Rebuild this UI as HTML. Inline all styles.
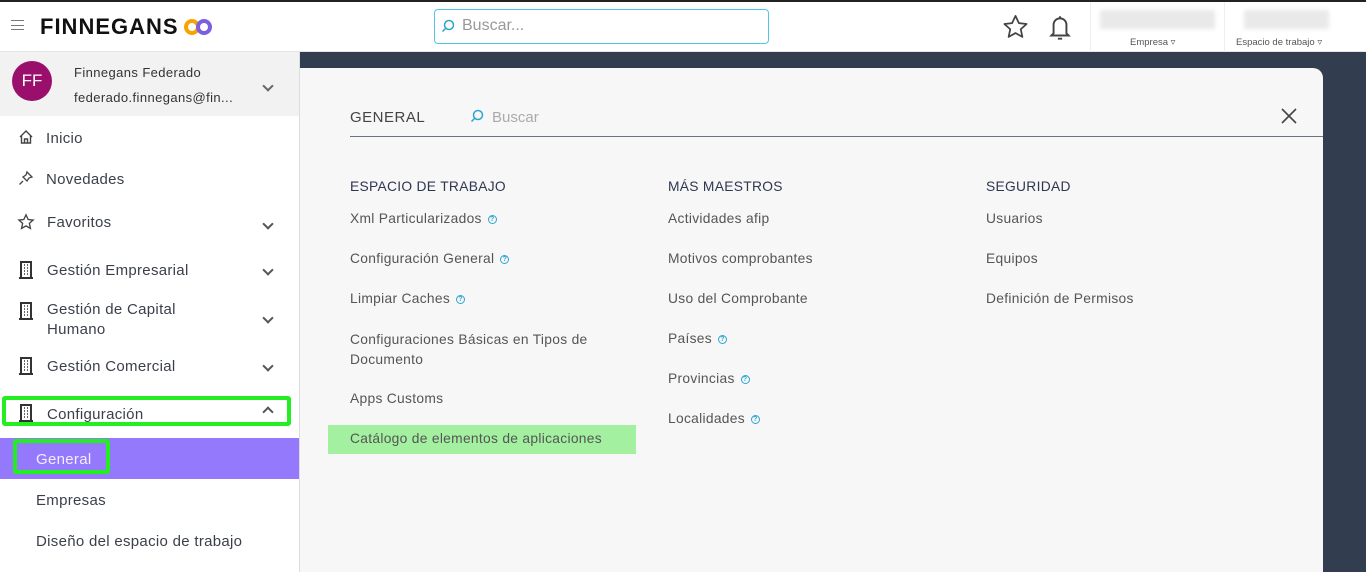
<!DOCTYPE html>
<html><head><meta charset="utf-8"><style>
*{margin:0;padding:0;box-sizing:border-box}
body{width:1366px;height:572px;overflow:hidden;font-family:"Liberation Sans",sans-serif;background:#fff;position:relative;color:#333}
.a{position:absolute;white-space:nowrap}
.top{position:absolute;left:0;top:0;width:1366px;height:52px;background:#fff;border-top:2px solid #222;border-bottom:1px solid #e6e6e6}
.side{position:absolute;left:0;top:52px;width:300px;height:520px;background:#fff;border-right:1px solid #ddd}
.bg{position:absolute;left:300px;top:52px;width:1066px;height:520px;background:#323d4f}
.panel{position:absolute;left:300px;top:68px;width:1023px;height:504px;background:#f7f7f7;border-top-right-radius:10px}
.nav{font-size:15px;color:#3a3f4a;letter-spacing:.3px}
.it{font-size:13.8px;color:#555;letter-spacing:.3px}
.hd{font-size:13.8px;color:#2f3650;letter-spacing:.3px}
.q{display:inline-block;width:9px;height:9px;border:1.3px solid #2ba6cf;border-radius:50%;font-size:7px;line-height:7px;text-align:center;color:#2ba6cf;margin-left:6px;vertical-align:2px;font-weight:bold}
.chev{position:absolute;left:264px;width:8px;height:8px;border-right:2px solid #555;border-bottom:2px solid #555;transform:rotate(45deg)}
</style></head><body>
<div class="top"></div>
<div class="a" style="left:11px;top:20px;width:13px;height:10px;border-top:1.5px solid #777;border-bottom:1.5px solid #777"></div>
<div class="a" style="left:11px;top:24.5px;width:13px;height:1.5px;background:#777"></div>
<div class="a" style="left:40px;top:14px;font-size:22px;font-weight:bold;color:#111;letter-spacing:1px">FINNEGANS</div>
<svg class="a" style="left:184px;top:18px" width="28" height="18" viewBox="0 0 28 18"><circle cx="8" cy="9" r="6" fill="none" stroke="#f7a400" stroke-width="4"/><circle cx="20" cy="9" r="6" fill="none" stroke="#7a5fe0" stroke-width="4"/></svg>
<div class="a" style="left:434px;top:9px;width:335px;height:35px;border:1px solid #4fc7e8;border-radius:4px"></div>
<svg class="a" style="left:441px;top:19px" width="14" height="14" viewBox="0 0 14 14"><circle cx="8" cy="6" r="4.5" fill="none" stroke="#2ba6cf" stroke-width="1.5"/><path d="M5 9L1.5 12.5" stroke="#2ba6cf" stroke-width="1.5"/></svg>
<div class="a" style="left:462px;top:17px;font-size:16px;color:#999">Buscar...</div>
<svg class="a" style="left:1001px;top:13px" width="29" height="28" viewBox="0 0 24 24"><path d="M12 2.5l2.9 6.2 6.6.7-5 4.5 1.4 6.6L12 17.2l-5.9 3.3 1.4-6.6-5-4.5 6.6-.7z" fill="none" stroke="#444" stroke-width="1.5" stroke-linejoin="round"/></svg>
<svg class="a" style="left:1047px;top:13px" width="26" height="30" viewBox="0 0 24 28"><path d="M6 19V11a6 6 0 0 1 12 0v8l2 2H4z" fill="none" stroke="#444" stroke-width="1.8"/><path d="M12 3v2M10 24h4" stroke="#444" stroke-width="1.8"/></svg>
<div class="a" style="left:1090px;top:2px;width:1px;height:50px;background:#eee"></div>
<div class="a" style="left:1224px;top:2px;width:1px;height:50px;background:#eee"></div>
<div class="a" style="left:1100px;top:10px;width:115px;height:19px;background:#e9e9e9;filter:blur(2px)"></div>
<div class="a" style="left:1244px;top:10px;width:85px;height:19px;background:#e9e9e9;filter:blur(2px)"></div>
<div class="a" style="left:1130px;top:37px;font-size:9.5px;color:#555">Empresa ▿</div>
<div class="a" style="left:1236px;top:37px;font-size:9.5px;color:#555">Espacio de trabajo ▿</div>

<div class="side"></div>
<div class="a" style="left:0;top:52px;width:299px;height:64px;background:#f2f2f2"></div>
<div class="a" style="left:12px;top:61px;width:40px;height:40px;border-radius:50%;background:#9a0f6b;color:#fff;font-size:17px;line-height:40px;text-align:center">FF</div>
<div class="a" style="left:74px;top:65px;font-size:13px;color:#333;letter-spacing:.4px">Finnegans Federado</div>
<div class="a" style="left:74px;top:90px;font-size:13px;color:#333;letter-spacing:.4px">federado.finnegans@fin...</div>
<div class="chev" style="top:82px;border-color:#666"></div>

<svg class="a" style="left:18px;top:129px" width="16" height="16" viewBox="0 0 16 16"><path d="M2 8L8 2l6 6M3.5 7v7h9V7M6.5 14v-4h3v4" fill="none" stroke="#444" stroke-width="1.4"/></svg>
<div class="a nav" style="left:46px;top:130px">Inicio</div>
<svg class="a" style="left:18px;top:170px" width="16" height="16" viewBox="0 0 16 16"><path d="M9 2l5 5-3 1-2 3-4-4 3-2zM5 11l-3.5 3.5" fill="none" stroke="#444" stroke-width="1.3"/></svg>
<div class="a nav" style="left:46px;top:171px">Novedades</div>
<svg class="a" style="left:17px;top:213px" width="18" height="18" viewBox="0 0 24 24"><path d="M12 2.5l2.9 6.2 6.6.7-5 4.5 1.4 6.6L12 17.2l-5.9 3.3 1.4-6.6-5-4.5 6.6-.7z" fill="none" stroke="#444" stroke-width="1.8"/></svg>
<div class="a nav" style="left:47px;top:214px">Favoritos</div><div class="chev" style="top:220px"></div>

<svg class="a" style="left:19px;top:261px" width="14" height="18" viewBox="0 0 14 18"><path d="M2 1h10v16H2zM0 17h14" fill="none" stroke="#333" stroke-width="2"/><path d="M5 4h1M8 4h1M5 7h1M8 7h1M5 10h1M8 10h1M5 13h1M8 13h1" stroke="#333" stroke-width="1.6"/></svg>
<div class="a nav" style="left:47px;top:262px">Gestión Empresarial</div><div class="chev" style="top:266px"></div>
<svg class="a" style="left:19px;top:302px" width="14" height="18" viewBox="0 0 14 18"><path d="M2 1h10v16H2zM0 17h14" fill="none" stroke="#333" stroke-width="2"/><path d="M5 4h1M8 4h1M5 7h1M8 7h1M5 10h1M8 10h1M5 13h1M8 13h1" stroke="#333" stroke-width="1.6"/></svg>
<div class="a nav" style="left:47px;top:300px;line-height:20px">Gestión de Capital<br>Humano</div><div class="chev" style="top:314px"></div>
<svg class="a" style="left:19px;top:357px" width="14" height="18" viewBox="0 0 14 18"><path d="M2 1h10v16H2zM0 17h14" fill="none" stroke="#333" stroke-width="2"/><path d="M5 4h1M8 4h1M5 7h1M8 7h1M5 10h1M8 10h1M5 13h1M8 13h1" stroke="#333" stroke-width="1.6"/></svg>
<div class="a nav" style="left:47px;top:358px">Gestión Comercial</div><div class="chev" style="top:362px"></div>

<div class="a" style="left:2px;top:396px;width:289px;height:30px;border:4px solid #22ee22;border-radius:3px"></div>
<svg class="a" style="left:19px;top:404px" width="14" height="18" viewBox="0 0 14 18"><path d="M2 1h10v16H2zM0 17h14" fill="none" stroke="#333" stroke-width="2"/><path d="M5 4h1M8 4h1M5 7h1M8 7h1M5 10h1M8 10h1M5 13h1M8 13h1" stroke="#333" stroke-width="1.6"/></svg>
<div class="a nav" style="left:47px;top:406px">Configuración</div>
<div class="chev" style="top:408px;transform:rotate(-135deg)"></div>
<div class="a" style="left:0;top:438px;width:299px;height:41px;background:#9579fc"></div>
<div class="a" style="left:13px;top:439px;width:97px;height:35px;border:4px solid #22ee22;border-radius:3px"></div>
<div class="a nav" style="left:36px;top:451px;color:#f2eeff">General</div>
<div class="a nav" style="left:36px;top:492px">Empresas</div>
<div class="a nav" style="left:36px;top:533px">Diseño del espacio de trabajo</div>

<div class="bg"></div>
<div class="panel"></div>
<div class="a" style="left:350px;top:109px;font-size:15px;color:#444;letter-spacing:.5px">GENERAL</div>
<svg class="a" style="left:470px;top:109px" width="14" height="14" viewBox="0 0 14 14"><circle cx="8" cy="6" r="4.5" fill="none" stroke="#2ba6cf" stroke-width="1.5"/><path d="M5 9L1.5 12.5" stroke="#2ba6cf" stroke-width="1.5"/></svg>
<div class="a" style="left:492px;top:109px;font-size:15px;color:#aaa">Buscar</div>
<svg class="a" style="left:1281px;top:108px" width="16" height="16" viewBox="0 0 16 16"><path d="M1 1L15 15M15 1L1 15" stroke="#444" stroke-width="1.6"/></svg>
<div class="a" style="left:350px;top:136px;width:973px;height:1px;background:#6a7480"></div>

<div class="a hd" style="left:350px;top:179px">ESPACIO DE TRABAJO</div>
<div class="a it" style="left:350px;top:211px">Xml Particularizados<span class="q">?</span></div>
<div class="a it" style="left:350px;top:251px">Configuración General<span class="q">?</span></div>
<div class="a it" style="left:350px;top:291px">Limpiar Caches<span class="q">?</span></div>
<div class="a it" style="left:350px;top:330px;line-height:20px">Configuraciones Básicas en Tipos de<br>Documento</div>
<div class="a it" style="left:350px;top:391px">Apps Customs</div>
<div class="a" style="left:328px;top:425px;width:308px;height:29px;background:#a3f0a0"></div>
<div class="a it" style="left:350px;top:431px">Catálogo de elementos de aplicaciones</div>

<div class="a hd" style="left:668px;top:179px">MÁS MAESTROS</div>
<div class="a it" style="left:668px;top:211px">Actividades afip</div>
<div class="a it" style="left:668px;top:251px">Motivos comprobantes</div>
<div class="a it" style="left:668px;top:291px">Uso del Comprobante</div>
<div class="a it" style="left:668px;top:331px">Países<span class="q">?</span></div>
<div class="a it" style="left:668px;top:371px">Provincias<span class="q">?</span></div>
<div class="a it" style="left:668px;top:411px">Localidades<span class="q">?</span></div>

<div class="a hd" style="left:986px;top:179px">SEGURIDAD</div>
<div class="a it" style="left:986px;top:211px">Usuarios</div>
<div class="a it" style="left:986px;top:251px">Equipos</div>
<div class="a it" style="left:986px;top:291px">Definición de Permisos</div>
</body></html>
